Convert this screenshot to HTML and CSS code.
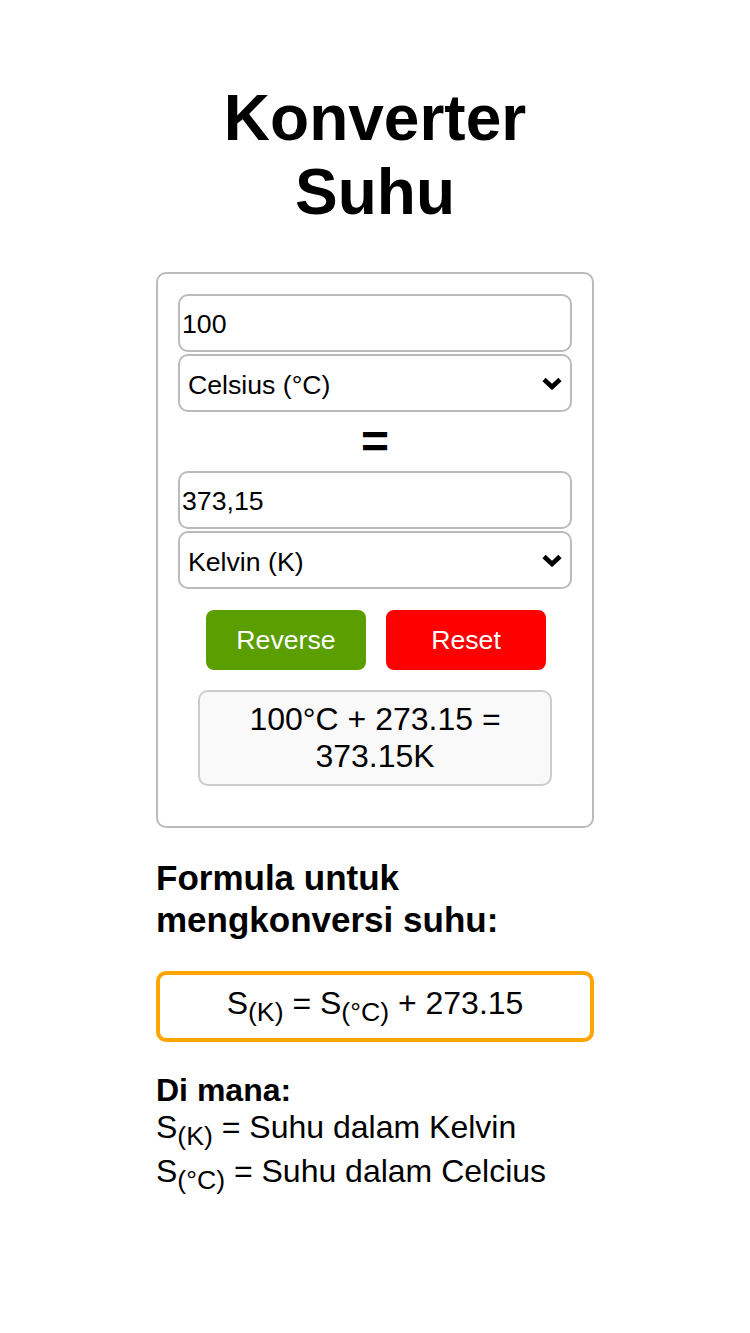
FILE: index.html
```html
<!DOCTYPE html>
<html lang="id">
<head>
<meta charset="utf-8">
<title>Konverter Suhu</title>
<link rel="stylesheet" href="styles.css">
</head>
<body>
<main class="page">
  <h1 class="title">Konverter Suhu</h1>
  <section class="card">
    <input class="field" type="text" value="100">
    <div class="select-wrap">
      <select class="unit"><option>Celsius (°C)</option></select>
      <svg class="chev" width="20" height="13" viewBox="0 0 20 13"><polyline points="2,2.5 10,10 18,2.5" fill="none" stroke="#000" stroke-width="4.6"/></svg>
    </div>
    <div class="equals">=</div>
    <input class="field" type="text" value="373,15">
    <div class="select-wrap">
      <select class="unit"><option>Kelvin (K)</option></select>
      <svg class="chev" width="20" height="13" viewBox="0 0 20 13"><polyline points="2,2.5 10,10 18,2.5" fill="none" stroke="#000" stroke-width="4.6"/></svg>
    </div>
    <div class="actions">
      <button class="btn btn-reverse" type="button">Reverse</button>
      <button class="btn btn-reset" type="button">Reset</button>
    </div>
    <div class="result">100°C + 273.15 = 373.15K</div>
  </section>
  <h2 class="formula-title">Formula untuk mengkonversi suhu:</h2>
  <div class="formula">S<sub>(K)</sub> = S<sub>(°C)</sub> + 273.15</div>
  <p class="where"><strong>Di mana:</strong><br>S<sub>(K)</sub> = Suhu dalam Kelvin<br>S<sub>(°C)</sub> = Suhu dalam Celcius</p>
</main>
</body>
</html>
```
FILE: styles.css
```css
html, body {
  margin: 0;
  padding: 0;
  background: #fff;
}
body {
  font-family: "Liberation Sans", Arial, sans-serif;
  font-size: 32px;
  color: #000;
}
.page {
  width: 438px;
  margin: 0 auto;
  padding-top: 38px;
}
.title {
  margin: 43px 0;
  font-size: 64px;
  font-weight: bold;
  text-align: center;
  line-height: normal;
}
.card {
  border: 2px solid #bbb;
  border-radius: 10px;
  padding: 20px;
}
.field {
  display: block;
  box-sizing: border-box;
  width: 100%;
  height: 58px;
  margin: 0;
  padding: 3px 2px 0;
  border: 2px solid #bbb;
  border-radius: 10px;
  font-family: "Liberation Sans", Arial, sans-serif;
  font-size: 26.67px;
  color: #000;
  background: #fff;
  outline: none;
}
.select-wrap {
  position: relative;
  margin-top: 2px;
}
.unit {
  display: block;
  box-sizing: border-box;
  width: 100%;
  height: 58px;
  margin: 0;
  padding: 3px 40px 0 8px;
  border: 2px solid #bbb;
  border-radius: 10px;
  font-family: "Liberation Sans", Arial, sans-serif;
  font-size: 26.67px;
  color: #000;
  background: #fff;
  -webkit-appearance: none;
  appearance: none;
  outline: none;
}
.chev {
  position: absolute;
  right: 10px;
  top: 23px;
  pointer-events: none;
}
.equals {
  height: 59px;
  line-height: 59px;
  font-size: 48px;
  font-weight: bold;
  text-align: center;
}
.actions {
  display: flex;
  justify-content: center;
  gap: 20px;
  margin-top: 21px;
  padding-left: 2px;
}
.btn {
  width: 160px;
  height: 60px;
  border: none;
  border-radius: 8px;
  font-family: "Liberation Sans", Arial, sans-serif;
  font-size: 26.67px;
  color: #fff;
  padding: 0;
}
.btn-reverse {
  background: #5a9e00;
}
.btn-reset {
  background: #ff0000;
}
.result {
  margin: 20px 20px;
  padding: 9px;
  border: 2px solid #ccc;
  border-radius: 10px;
  background: #f9f9f9;
  font-size: 32px;
  text-align: center;
}
.formula-title {
  margin: 29px 0 30px;
  font-size: 35px;
  line-height: 42px;
  font-weight: bold;
}
.formula {
  border: 4px solid #ffa500;
  border-radius: 10px;
  padding: 10px;
  text-align: center;
  font-size: 32px;
}
.where {
  margin: 30px 0 0;
  font-size: 32px;
}
```
